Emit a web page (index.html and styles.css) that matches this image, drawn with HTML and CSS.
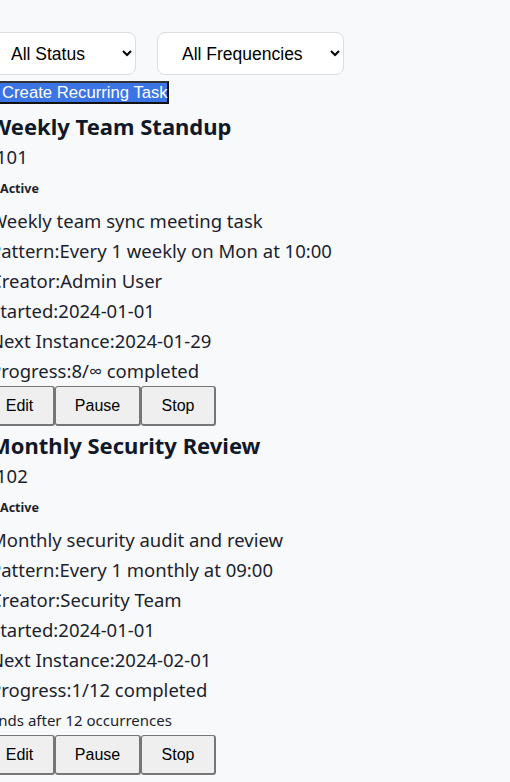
FILE: index.html
```html
<!DOCTYPE html>
<html>
<head>
<meta charset="utf-8">
<link rel="stylesheet" href="styles.css">
</head>
<body>
<div class="page">
  <div class="filters">
    <select class="filter filter-status"><option>All Status</option></select>
    <select class="filter filter-freq"><option>All Frequencies</option></select>
  </div>
  <button class="create-btn">Create Recurring Task</button>

  <div class="task">
    <h3 class="task-title">Weekly Team Standup</h3>
    <div class="task-id">101</div>
    <div class="status">Active</div>
    <div class="line">Weekly team sync meeting task</div>
    <div class="line">Pattern:Every 1 weekly on Mon at 10:00</div>
    <div class="line">Creator:Admin User</div>
    <div class="line">Started:2024-01-01</div>
    <div class="line">Next Instance:2024-01-29</div>
    <div class="line">Progress:8/∞ completed</div>
    <div class="actions">
      <button class="act act-edit">Edit</button><button class="act act-pause">Pause</button><button class="act act-stop">Stop</button>
    </div>
  </div>

  <div class="task">
    <h3 class="task-title">Monthly Security Review</h3>
    <div class="task-id">102</div>
    <div class="status">Active</div>
    <div class="line">Monthly security audit and review</div>
    <div class="line">Pattern:Every 1 monthly at 09:00</div>
    <div class="line">Creator:Security Team</div>
    <div class="line">Started:2024-01-01</div>
    <div class="line">Next Instance:2024-02-01</div>
    <div class="line">Progress:1/12 completed</div>
    <div class="ends">Ends after 12 occurrences</div>
    <div class="actions">
      <button class="act act-edit">Edit</button><button class="act act-pause">Pause</button><button class="act act-stop">Stop</button>
    </div>
  </div>
</div>
</body>
</html>
```

FILE: styles.css
```css
html, body {
  margin: 0;
  padding: 0;
  background: #f8f9fb;
}
body {
  font-family: "Noto Sans", "Open Sans", sans-serif;
  color: #1c1f2e;
  overflow: hidden;
}
.page {
  margin-left: -10px;
  padding-top: 32px;
}
.filters {
  display: flex;
  gap: 21px;
  margin-left: -4px;
}
.filter {
  height: 43px;
  border: 1px solid #dcdde1;
  border-radius: 8px;
  background: #fff;
  font-family: "Liberation Sans", Arial, sans-serif;
  font-size: 17.5px;
  color: #000;
  padding: 0 8px 0 20px;
}
.filter-status { width: 150px; }
.filter-freq { width: 187px; }
.create-btn {
  display: block;
  margin: 6px 0 0 8px;
  padding: 1px 2px 0 2px;
  height: 23px;
  width: 171px;
  background: #3b74e4;
  color: #fff;
  border: 2px solid #111;
  border-top-color: #333;
  border-radius: 0;
  font-family: "Liberation Sans", Arial, sans-serif;
  font-size: 16.7px;
  line-height: 18px;
  text-align: left;
  white-space: nowrap;
}
.task-title {
  margin: 6px 0 0;
  font-size: 22px;
  line-height: 32px;
  font-weight: 700;
  color: #111827;
}
.task + .task .task-title { margin-top: 3px; }
.task-id {
  font-size: 18.5px;
  line-height: 30px;
  margin-left: 6px;
}
.line {
  font-size: 18.5px;
  line-height: 30px;
}
.status {
  font-size: 12.5px;
  font-weight: 700;
  line-height: 34px;
  margin-left: 10px;
}
.ends {
  font-size: 15px;
  line-height: 30px;
}
.actions {
  display: flex;
  margin-left: -5px;
}
.act {
  height: 40px;
  background: #efefef;
  border: 2px solid #767676;
  border-width: 1px 2px 2px 1px;
  border-radius: 3px;
  font-family: "Liberation Sans", Arial, sans-serif;
  font-size: 16px;
  color: #000;
  margin: 0;
}
.act-edit { width: 70px; }
.act-pause { width: 86px; }
.act-stop { width: 75px; }
```
